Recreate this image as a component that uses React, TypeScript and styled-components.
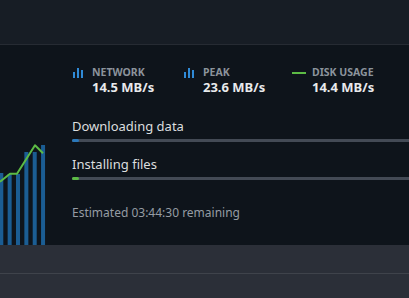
import React from 'react';
import styled, { createGlobalStyle } from 'styled-components';

const GlobalStyle = createGlobalStyle`
  html, body {
    margin: 0;
    padding: 0;
    background: #0e141b;
    overflow: hidden;
  }
  body {
    font-family: 'Noto Sans', 'Open Sans', sans-serif;
  }
`;

const stats = [
  { label: 'Network', value: '14.5 MB/s', icon: 'bars' },
  { label: 'Peak', value: '23.6 MB/s', icon: 'bars' },
  { label: 'Disk usage', value: '14.4 MB/s', icon: 'line' },
];

const tasks = [
  { label: 'Downloading data', color: '#2a78ba', progress: 7 },
  { label: 'Installing files', color: '#5cbb45', progress: 7 },
];

// bar heights measured from the bottom of the chart
const bars = [72, 71, 71, 93, 93, 100];
const linePoints = '0,136.7 10,128.7 17,128.7 35,100.3 43,108.3';

const BarsIcon = () => (
  <svg width="10" height="10" viewBox="0 0 10 10">
    <rect x="0" y="4" width="2" height="6" fill="#2f8ad6" />
    <rect x="4" y="0" width="2" height="10" fill="#2f8ad6" />
    <rect x="8" y="2" width="2" height="8" fill="#2f8ad6" />
  </svg>
);

const LineIcon = () => (
  <svg width="14" height="10" viewBox="0 0 14 10">
    <rect x="0" y="4" width="14" height="2" fill="#5cbb45" />
  </svg>
);

const App = () => {
  return (
    <Page>
      <GlobalStyle />
      <Header />
      <Main>
        <Chart width="48" height="200" viewBox="0 0 48 200">
          {bars.map((h, i) => (
            <rect
              key={i}
              x={-0.7 + i * 8.35}
              y={200 - h}
              width="4"
              height={h}
              fill="#1b5d93"
            />
          ))}
          <polyline
            points={linePoints}
            fill="none"
            stroke="#5cbb45"
            strokeWidth="2"
            strokeLinejoin="round"
          />
        </Chart>
        <Content>
          <StatsRow>
            {stats.map((s) => (
              <Stat key={s.label}>
                <IconBox $wide={s.icon === 'line'}>
                  {s.icon === 'bars' ? <BarsIcon /> : <LineIcon />}
                </IconBox>
                <StatText>
                  <StatLabel>{s.label}</StatLabel>
                  <StatValue>{s.value}</StatValue>
                </StatText>
              </Stat>
            ))}
          </StatsRow>
          <Tasks>
            {tasks.map((t) => (
              <Task key={t.label}>
                <TaskLabel>{t.label}</TaskLabel>
                <Track>
                  <Fill $color={t.color} style={{ width: t.progress }} />
                </Track>
              </Task>
            ))}
          </Tasks>
          <Remaining>Estimated 03:44:30 remaining</Remaining>
        </Content>
      </Main>
      <Footer>
        <FooterRow />
        <FooterRow />
      </Footer>
    </Page>
  );
};

export default App;

const Page = styled.div`
  width: 409px;
  height: 298px;
  display: flex;
  flex-direction: column;
  overflow: hidden;
`;

const Header = styled.div`
  flex: none;
  height: 44px;
  background: #171d25;
  border-bottom: 1px solid #262b33;
`;

const Main = styled.div`
  flex: none;
  height: 200px;
  display: flex;
  background: #0e141b;
`;

const Chart = styled.svg`
  display: block;
  flex: none;
`;

const Content = styled.div`
  flex: 1;
  min-width: 0;
  padding: 21px 0 0 24px;
  display: flex;
  flex-direction: column;
`;

const StatsRow = styled.div`
  display: grid;
  grid-template-columns: 111px 108px auto;
`;

const Stat = styled.div`
  display: flex;
  align-items: flex-start;
`;

const IconBox = styled.div<{ $wide?: boolean }>`
  display: flex;
  margin: 2px ${(p) => (p.$wide ? '6px' : '9px')} 0 1px;
  svg {
    display: block;
  }
`;

const StatText = styled.div`
  display: flex;
  flex-direction: column;
`;

const StatLabel = styled.div`
  font-size: 10.5px;
  line-height: 13px;
  font-weight: 700;
  color: #8b939b;
  text-transform: uppercase;
`;

const StatValue = styled.div`
  font-size: 13px;
  line-height: 16px;
  font-weight: 700;
  color: #e8eaec;
`;

const Tasks = styled.div`
  margin-top: 23px;
  display: flex;
  flex-direction: column;
  gap: 14px;
`;

const Task = styled.div`
  display: flex;
  flex-direction: column;
  gap: 4px;
`;

const TaskLabel = styled.div`
  font-size: 13px;
  line-height: 17px;
  color: #dcdedf;
`;

const Track = styled.div`
  height: 3px;
  width: 400px;
  background: #434a55;
  border-radius: 2px;
`;

const Fill = styled.div<{ $color: string }>`
  height: 100%;
  background: ${(p) => p.$color};
  border-radius: 2px;
`;

const Remaining = styled.div`
  margin-top: 25px;
  font-size: 12px;
  line-height: 16px;
  color: #959ca3;
`;

const Footer = styled.div`
  flex: 1;
  background: #2b2f38;
  display: flex;
  flex-direction: column;
`;

const FooterRow = styled.div`
  height: 28px;
  & + & {
    border-top: 1px solid #3f434b;
  }
`;
